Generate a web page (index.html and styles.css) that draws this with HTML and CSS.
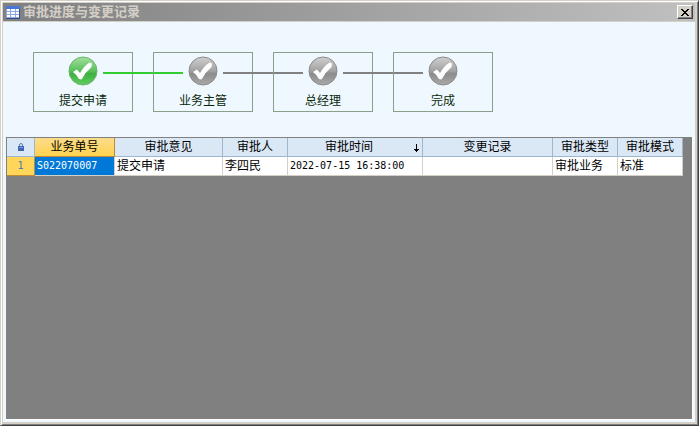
FILE: index.html
```html
<!DOCTYPE html>
<html lang="zh-CN">
<head>
    <meta charset="UTF-8">
    <meta name="viewport" content="width=device-width, initial-scale=1.0">
    <title>审批进度与变更记录</title>
    <link rel="stylesheet" href="styles.css">
</head>
<body>
    <!-- Shared shapes -->
    <svg class="defs" width="0" height="0" aria-hidden="true">
        <defs>
            <linearGradient id="green" x1="0" y1="0" x2="0" y2="1">
                <stop offset="0" stop-color="#a5dfa2"/>
                <stop offset="0.5" stop-color="#58c05a"/>
                <stop offset="0.6" stop-color="#3cb040"/>
                <stop offset="1" stop-color="#62cf60"/>
            </linearGradient>
            <linearGradient id="gray" x1="0" y1="0" x2="0" y2="1">
                <stop offset="0" stop-color="#cfcfcf"/>
                <stop offset="0.5" stop-color="#a2a2a2"/>
                <stop offset="0.6" stop-color="#8b8b8b"/>
                <stop offset="1" stop-color="#aaaaaa"/>
            </linearGradient>
            <symbol id="tick" viewBox="0 0 30 30">
                <path d="M5 16 L9 13.5 L12 17 Q16 10 21.500 6.500 L24 7.500 L23.500 11 Q17.500 16 13.500 23.500 L11 23 Q8.500 18.500 5 16Z" fill="#fff"/>
            </symbol>
        </defs>
    </svg>

    <div class="window">
        <!-- Title bar -->
        <header class="titlebar">
            <svg class="app-icon" width="14" height="13" viewBox="0 0 14 13" shape-rendering="crispEdges">
                <rect width="14" height="13" fill="#8ea9dc"/>
                <rect width="14" height="3" fill="#4a76d8"/>
                <path d="M1 3h3v2H1zM5 3h4v2H5zM10 3h3v2h-3zM1 6h3v2H1zM5 6h4v2H5zM10 6h3v2h-3zM1 9h3v2H1zM5 9h4v2H5zM10 9h3v2h-3z" fill="#fff"/>
                <path d="M0 12h14v1H0zM13 3h1v10h-1z" fill="#34508c"/>
            </svg>
            <h1>审批进度与变更记录</h1>
            <button class="close" type="button" aria-label="关闭">
                <svg width="8" height="7" viewBox="0 0 8 7" shape-rendering="crispEdges">
                    <path d="M0 0h2v1H0zM6 0h2v1H6zM1 1h2v1H1zM5 1h2v1H5zM2 2h4v1H2zM3 3h2v1H3zM2 4h4v1H2zM1 5h2v1H1zM5 5h2v1H5zM0 6h2v1H0zM6 6h2v1H6z" fill="#000"/>
                </svg>
            </button>
        </header>

        <main class="content">
            <!-- Approval progress -->
            <ol class="steps">
                <li class="step done">
                    <svg width="30" height="30" viewBox="0 0 30 30">
                        <circle cx="15" cy="15" r="14" fill="url(#green)" stroke="#6bb56d"/>
                        <use href="#tick"/>
                    </svg>
                    <span>提交申请</span>
                </li>
                <li class="step">
                    <svg width="30" height="30" viewBox="0 0 30 30">
                        <circle cx="15" cy="15" r="14" fill="url(#gray)" stroke="#8b8b8b"/>
                        <use href="#tick"/>
                    </svg>
                    <span>业务主管</span>
                </li>
                <li class="step">
                    <svg width="30" height="30" viewBox="0 0 30 30">
                        <circle cx="15" cy="15" r="14" fill="url(#gray)" stroke="#8b8b8b"/>
                        <use href="#tick"/>
                    </svg>
                    <span>总经理</span>
                </li>
                <li class="step">
                    <svg width="30" height="30" viewBox="0 0 30 30">
                        <circle cx="15" cy="15" r="14" fill="url(#gray)" stroke="#8b8b8b"/>
                        <use href="#tick"/>
                    </svg>
                    <span>完成</span>
                </li>
            </ol>

            <!-- Change records -->
            <div class="grid">
                <table>
                    <colgroup>
                        <col class="w-row">
                        <col class="w-no">
                        <col class="w-opinion">
                        <col class="w-small">
                        <col class="w-time">
                        <col class="w-change">
                        <col class="w-small">
                        <col class="w-small">
                    </colgroup>
                    <thead>
                        <tr>
                            <th class="corner">
                                <svg width="6" height="8" viewBox="0 0 6 8" role="img" aria-label="锁定">
                                    <path d="M1.500 4V2Q1.500 .5 3 .5T4.500 2V4" fill="none" stroke="#5b7fc0"/>
                                    <path d="M0 3h6v5H0z" fill="#3f66b5"/>
                                    <path d="M1 4h4v1H1z" fill="#7b9ada"/>
                                </svg>
                            </th>
                            <th class="current">业务单号</th>
                            <th>审批意见</th>
                            <th>审批人</th>
                            <th class="sorted">审批时间
                                <svg class="arrow" width="5" height="8" viewBox="0 0 5 8" shape-rendering="crispEdges">
                                    <path d="M2 0h1v8H2zM0 5h5v1H0zM1 6h3v1H1z" fill="#000"/>
                                </svg>
                            </th>
                            <th>变更记录</th>
                            <th>审批类型</th>
                            <th>审批模式</th>
                        </tr>
                    </thead>
                    <tbody>
                        <tr>
                            <th class="row-no mono">1</th>
                            <td class="selected mono">S022070007</td>
                            <td>提交申请</td>
                            <td>李四民</td>
                            <td class="mono">2022-07-15 16:38:00</td>
                            <td></td>
                            <td>审批业务</td>
                            <td>标准</td>
                        </tr>
                    </tbody>
                </table>
            </div>
        </main>
    </div>
</body>
</html>
```

FILE: styles.css
```css
* {
    box-sizing: border-box;
}
body {
    margin: 0;
    font-family: "Liberation Sans", "Noto Sans CJK SC", sans-serif;
    font-size: 12px;
    line-height: 16px;
    color: #000;
}
.defs {
    position: absolute;
}
.window {
    display: flex;
    flex-direction: column;
    min-height: 100vh;
    padding: 1px;
    background: #d4d0c8;
    border: 1px solid;
    border-color: #d4d0c8 #404040 #404040 #d4d0c8;
    box-shadow: inset 1px 1px #fff, inset -1px -1px #808080;
}

/* Title bar */
.titlebar {
    display: flex;
    align-items: center;
    height: 18px;
    margin: 1px 2px 1px 1px;
    padding: 0 2px 0 3px;
    background: linear-gradient(to right, #808080, #c0c0c0);
}
.titlebar h1 {
    flex: 1;
    margin: 0 0 0 3px;
    font-size: 13px;
    font-weight: bold;
    color: #d4d0c8;
}
.close {
    display: flex;
    align-items: center;
    justify-content: center;
    width: 16px;
    height: 14px;
    padding: 0;
    background: #d4d0c8;
    border: 1px solid;
    border-color: #fff #404040 #404040 #fff;
    box-shadow: inset -1px -1px #808080;
}

.content {
    display: flex;
    flex: 1;
    flex-direction: column;
    margin: 0 2px 2px 1px;
    padding: 0 3px 3px;
    background: #f0f8ff;
}

/* Approval progress */
.steps {
    display: flex;
    gap: 20px;
    margin: 0;
    padding: 30px 27px 25px;
    list-style: none;
}
.step {
    position: relative;
    display: flex;
    flex-direction: column;
    align-items: center;
    gap: 7px;
    width: 100px;
    height: 60px;
    padding-top: 3px;
    border: 1px solid #8a9f8a;
    color: #0a280a;
}
.step::after {
    content: "";
    position: absolute;
    top: 19px;
    left: 69px;
    width: 80px;
    height: 2px;
    background: #808080;
}
.step.done::after {
    background: #32cd32;
}
.step:last-child::after {
    display: none;
}

/* Change records */
.grid {
    flex: 1;
    background: #808080;
    border-top: 1px solid #808080;
    border-left: 1px solid #808080;
    box-shadow: 0 1px #fff, 1px 0 #fff;
}
table {
    width: 676px;
    table-layout: fixed;
    border-collapse: separate;
    border-spacing: 0;
}
.w-row { width: 28px; }
.w-no { width: 80px; }
.w-opinion { width: 108px; }
.w-small { width: 65px; }
.w-time { width: 135px; }
.w-change { width: 130px; }
th, td {
    height: 19px;
    padding: 0 2px;
    line-height: 16px;
    font-weight: normal;
    white-space: nowrap;
    border-right: 1px solid #d4d0c8;
    border-bottom: 1px solid #d4d0c8;
}
td {
    background: #fff;
    text-align: left;
}
thead th {
    background: #dae7f5;
    border-color: #9eb6ce;
}
thead .current {
    background: linear-gradient(#fbdc8c, #ffd24f);
    border-color: #c28a30;
}
.corner svg {
    display: block;
    margin: 0 auto;
}
thead .sorted {
    position: relative;
    padding-right: 14px;
}
.arrow {
    position: absolute;
    top: 6px;
    right: 3px;
}
tbody .row-no {
    background: #ffd55a;
    border-color: #c28a30;
    color: #4a76b0;
}
.selected {
    background: #0078d7;
    color: #fff;
}
td.mono, th.mono {
    font-family: "DejaVu Sans Mono", monospace;
    font-size: 10px;
}
```
